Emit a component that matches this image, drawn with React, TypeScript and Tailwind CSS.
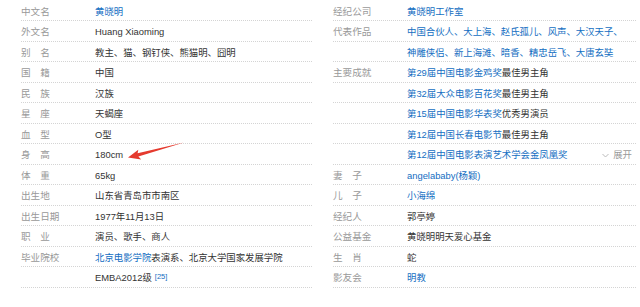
const BLUE = 'text-[#136ec2]'

type Row = { label?: string; value: React.ReactNode; extra?: React.ReactNode }

const L = ({ children }: { children: React.ReactNode }) => <span className={BLUE}>{children}</span>

const left: Row[] = [
  { label: '中文名', value: <L>黄晓明</L> },
  { label: '外文名', value: 'Huang Xiaoming' },
  { label: '别　名', value: '教主、猫、钢钉侠、熊猫明、囧明' },
  { label: '国　籍', value: '中国' },
  { label: '民　族', value: '汉族' },
  { label: '星　座', value: '天蝎座' },
  { label: '血　型', value: 'O型' },
  { label: '身　高', value: '180cm' },
  { label: '体　重', value: '65kg' },
  { label: '出生地', value: '山东省青岛市市南区' },
  { label: '出生日期', value: '1977年11月13日' },
  { label: '职　业', value: '演员、歌手、商人' },
  {
    label: '毕业院校',
    value: (
      <>
        <L>北京电影学院</L>表演系、北京大学国家发展学院
      </>
    ),
  },
  {
    value: (
      <>
        EMBA2012级
        <sup className={`${BLUE} ml-[3px] text-[7.5px] relative -top-[2px]`}>[25]</sup>
      </>
    ),
  },
]

const right: Row[] = [
  { label: '经纪公司', value: <L>黄晓明工作室</L> },
  { label: '代表作品', value: <L>中国合伙人、大上海、赵氏孤儿、风声、大汉天子、</L> },
  { value: <L>神雕侠侣、新上海滩、暗香、精忠岳飞、大唐玄奘</L> },
  { label: '主要成就', value: <><L>第29届中国电影金鸡奖</L>最佳男主角</> },
  { value: <><L>第32届大众电影百花奖</L>最佳男主角</> },
  { value: <><L>第15届中国电影华表奖</L>优秀男演员</> },
  { value: <><L>第12届中国长春电影节</L>最佳男主角</> },
  {
    value: <L>第12届中国电影表演艺术学会金凤凰奖</L>,
    extra: (
      <span className="ml-auto mr-[4px] flex items-center gap-[4px] text-[9.4px] text-[#999]">
        <svg width="7" height="5" viewBox="0 0 7 5" className="mt-[1px]">
          <path d="M0.5 1 L3.5 4 L6.5 1" fill="none" stroke="#bbb" strokeWidth="1" />
        </svg>
        展开
      </span>
    ),
  },
  { label: '妻　子', value: <L>angelababy(杨颖)</L> },
  { label: '儿　子', value: <L>小海绵</L> },
  { label: '经纪人', value: '郭亭婷' },
  { label: '公益基金', value: '黄晓明明天爱心基金' },
  { label: '生　肖', value: '蛇' },
  { label: '影友会', value: <L>明教</L> },
]

const Column = ({ rows, className }: { rows: Row[]; className: string }) => (
  <div className={className}>
    {rows.map((r, i) => (
      <div
        key={i}
        className="h-[20.5px] flex items-center pt-[3px] border-b border-dotted border-[#d4d4d4] whitespace-nowrap"
      >
        <span className="w-[74px] shrink-0 text-[9.6px] text-[#999]">{r.label}</span>
        <span className="text-[9.4px] text-[#333]">{r.value}</span>
        {r.extra}
      </div>
    ))}
  </div>
)

export default function App() {
  return (
    <div
      className="relative w-[640px] h-[307px] bg-white overflow-hidden"
      style={{ fontFamily: '"Liberation Sans", "Noto Sans CJK SC", sans-serif' }}
    >
      <div className="flex pt-[0.5px]">
        <Column rows={left} className="w-[300px] ml-[12px] pl-[9px]" />
        <Column rows={right} className="w-[318px] ml-[6px] pl-[15px]" />
      </div>

      {/* red arrow pointing at the height */}
      <svg className="absolute left-0 top-0 pointer-events-none" width="640" height="307">
        <polygon
          points="128,157.5 138.3,149.7 137.6,153.3 184,142.6 138.4,156.6 141.2,159.6"
          fill="#e53a2e"
        />
      </svg>
    </div>
  )
}
